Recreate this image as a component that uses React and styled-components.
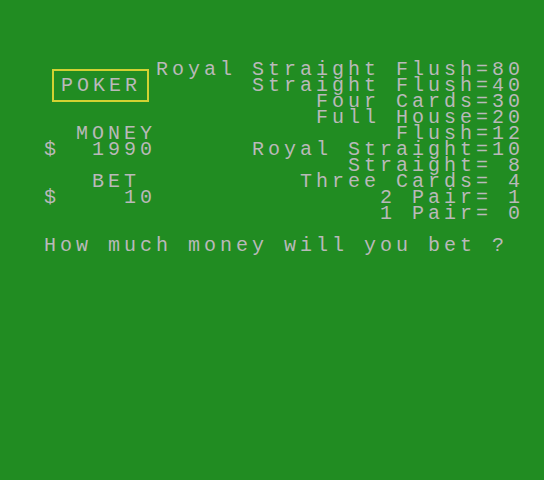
import React from "react";
import styled, { createGlobalStyle } from "styled-components";

const GlobalStyle = createGlobalStyle`
  html, body {
    margin: 0;
    padding: 0;
    background: #218c22;
  }
`;

const payouts = [
  "Royal Straight Flush=80",
  "Straight Flush=40",
  "Four Cards=30",
  "Full House=20",
  "Flush=12",
  "Royal Straight=10",
  "Straight= 8",
  "Three Cards= 4",
  "2 Pair= 1",
  "1 Pair= 0",
];

const App = () => {
  return (
    <>
      <GlobalStyle />
      <Screen>
        <Top>
          <Side>
            <TitleBox>POKER</TitleBox>
            <Line $col={4}>MONEY</Line>
            <Line $col={2}>{"$  1990"}</Line>
            <Line />
            <Line $col={5}>BET</Line>
            <Line $col={2}>{"$    10"}</Line>
          </Side>
          <PayTable>
            {payouts.map((p) => (
              <Line key={p}>{p}</Line>
            ))}
          </PayTable>
        </Top>
        <Prompt $col={2}>How much money will you bet ?</Prompt>
      </Screen>
    </>
  );
};

const Screen = styled.div`
  width: 544px;
  height: 480px;
  box-sizing: border-box;
  padding: 62px 0 0 12px;
  background: #218c22;
  color: #b9b9b9;
  font-family: "Liberation Mono", "DejaVu Sans Mono", monospace;
  font-size: 20px;
  letter-spacing: 4px;
  line-height: 16px;
  overflow: hidden;
`;

const Top = styled.div`
  display: flex;
  width: 512px;
`;

const Side = styled.div`
  width: 144px;
  display: flex;
  flex-direction: column;
`;

const Line = styled.div`
  height: 16px;
  white-space: pre;
  padding-left: ${(p) => (p.$col || 0) * 16}px;
`;

const TitleBox = styled.div`
  box-sizing: border-box;
  width: 97px;
  height: 33px;
  margin: 7px 0 24px 40px;
  padding: 7px 0 0 7px;
  border: 2px solid #d2d232;
  white-space: pre;
`;

const PayTable = styled.div`
  flex: 1;
  display: flex;
  flex-direction: column;
  align-items: flex-end;
`;

const Prompt = styled(Line)`
  margin-top: 16px;
`;

export default App;
